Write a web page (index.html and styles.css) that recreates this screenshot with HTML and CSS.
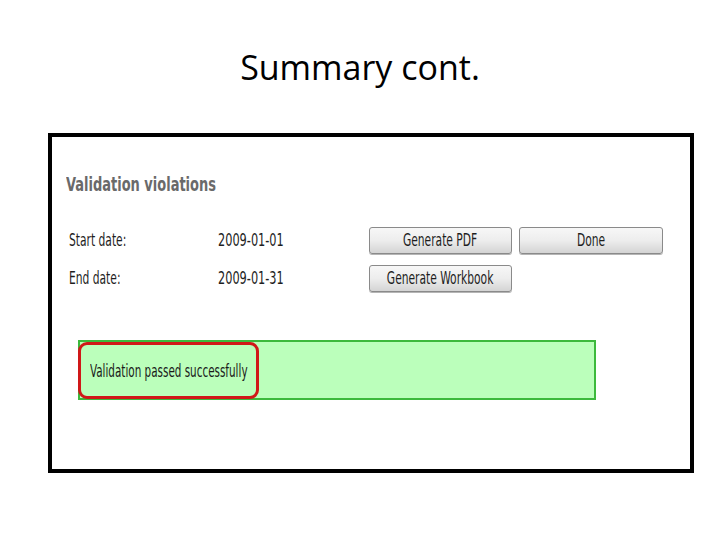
FILE: index.html
```html
<!DOCTYPE html>
<html>
<head>
<meta charset="utf-8">
<link rel="stylesheet" href="styles.css">
</head>
<body>
  <h1 class="title">Summary cont.</h1>
  <div class="frame">
    <h2 class="heading"><span class="sq">Validation violations</span></h2>
    <div class="form">
      <span class="label"><span class="sq">Start date:</span></span>
      <span class="value"><span class="sq">2009-01-01</span></span>
      <button class="btn"><span class="sq-c">Generate PDF</span></button>
      <button class="btn"><span class="sq-c">Done</span></button>
      <span class="label"><span class="sq">End date:</span></span>
      <span class="value"><span class="sq">2009-01-31</span></span>
      <button class="btn"><span class="sq-c">Generate Workbook</span></button>
    </div>
    <div class="status">
      <span class="status-text"><span class="sq">Validation passed successfully</span></span>
    </div>
  </div>
</body>
</html>
```
FILE: styles.css
```css
html, body {
  margin: 0;
  padding: 0;
  background: #ffffff;
}
body {
  width: 720px;
  height: 540px;
  overflow: hidden;
}
.title {
  margin: 0;
  padding-top: 44px;
  height: 133px;
  box-sizing: border-box;
  text-align: center;
  font-family: "Open Sans", "Noto Sans", sans-serif;
  font-weight: 400;
  font-size: 34px;
  line-height: 46px;
  color: #000;
}
.frame {
  margin-left: 48px;
  width: 646px;
  height: 340px;
  box-sizing: border-box;
  border: 4px solid #000;
  padding-top: 35px;
  font-family: "DejaVu Sans Condensed", "DejaVu Sans", sans-serif;
  font-stretch: condensed;
}
.sq {
  display: inline-block;
  white-space: nowrap;
  transform: scaleX(0.7);
  transform-origin: left center;
}
.sq-c {
  display: inline-block;
  flex: none;
  white-space: nowrap;
  transform: scaleX(0.7);
  transform-origin: center center;
}
.heading {
  margin: 0 0 0 14px;
  font-size: 19px;
  line-height: 24px;
  font-weight: 700;
  color: #6a6a6a;
}
.heading .sq {
  transform: scaleX(0.76);
}
.form {
  margin: 31px 0 0 17px;
  display: grid;
  grid-template-columns: 142px 144px 143px 144px;
  grid-auto-rows: 27px;
  column-gap: 7px;
  row-gap: 11px;
  align-items: center;
  font-size: 17px;
  color: #1e1e1e;
}
.label, .value {
  line-height: 27px;
  white-space: nowrap;
}
.value .sq {
  transform: scaleX(0.74);
}
.btn {
  height: 27px;
  margin: 0;
  padding: 0;
  display: flex;
  align-items: center;
  justify-content: center;
  border: 1px solid #8a8a8a;
  border-radius: 3px;
  background: linear-gradient(#f7f7f7 0%, #ededed 50%, #d4d4d4 100%);
  box-shadow: 0 1px 0 #b5b5b5;
  font-family: inherit;
  font-stretch: condensed;
  font-size: 17px;
  line-height: 25px;
  white-space: nowrap;
  color: #1e1e1e;
}
.status {
  margin: 48px 0 0 26px;
  width: 518px;
  height: 60px;
  box-sizing: border-box;
  border: 2px solid #3cb93c;
  background: #bbffbb;
  display: flex;
}
.status-text {
  margin-left: -2px;
  width: 181px;
  height: 57px;
  box-sizing: border-box;
  border: 3px solid #d01818;
  border-radius: 9px;
  padding: 0 9px;
  display: flex;
  align-items: center;
  font-size: 17px;
  color: #1a1a1a;
}
.status-text .sq {
  transform: scaleX(0.68);
}
```
